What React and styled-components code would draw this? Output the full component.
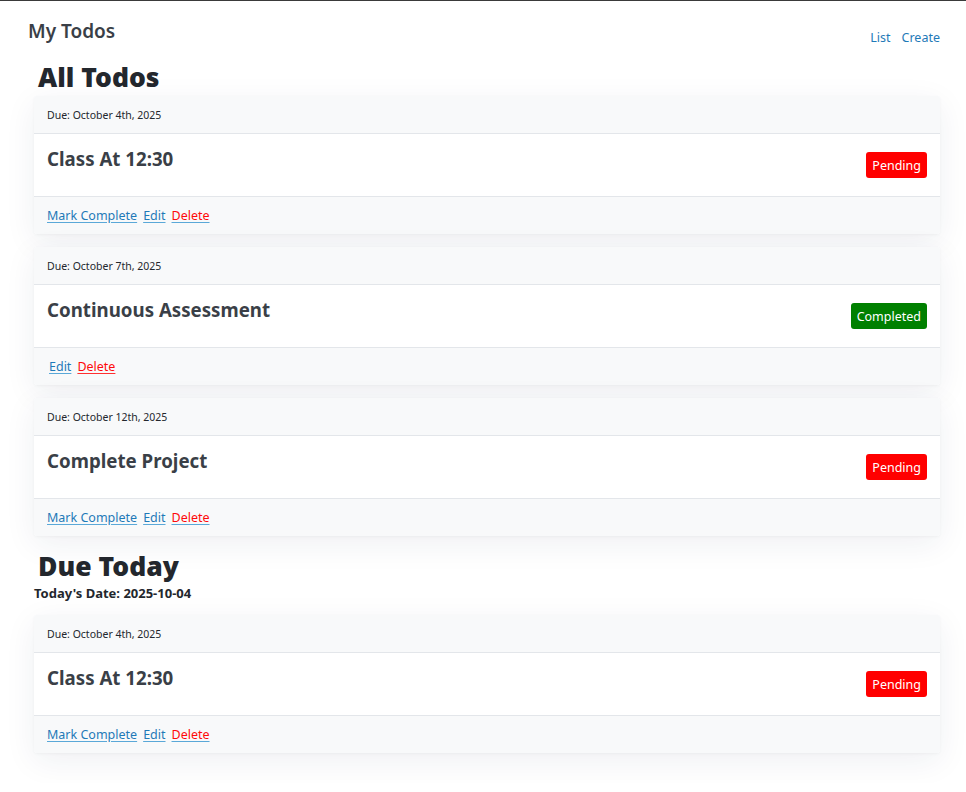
import styled, { createGlobalStyle } from "styled-components";

const GlobalStyle = createGlobalStyle`
  body {
    margin: 0;
    background: #fff;
    font-family: "Noto Sans", "Open Sans", sans-serif;
    color: #212529;
    border-top: 1px solid #3a3a3a;
  }
`;

const todos = [
  { id: 1, due: "October 4th, 2025", title: "Class At 12:30", done: false },
  { id: 2, due: "October 7th, 2025", title: "Continuous Assessment", done: true },
  { id: 3, due: "October 12th, 2025", title: "Complete Project", done: false },
];

const TodoCard = ({ todo }) => (
  <Card>
    <CardHeader>Due: {todo.due}</CardHeader>
    <CardBody>
      <Title>{todo.title}</Title>
      <Badge $done={todo.done}>{todo.done ? "Completed" : "Pending"}</Badge>
    </CardBody>
    <CardFooter $done={todo.done}>
      {!todo.done && <ActionLink href="#">Mark Complete</ActionLink>}
      <ActionLink href="#">Edit</ActionLink>
      <DeleteLink href="#" $done={todo.done}>
        Delete
      </DeleteLink>
    </CardFooter>
  </Card>
);

export default function App() {
  return (
    <>
      <GlobalStyle />
      <Nav>
        <Brand>My Todos</Brand>
        <NavLinks>
          <NavLink href="#">List</NavLink>
          <NavLink href="#">Create</NavLink>
        </NavLinks>
      </Nav>
      <Main>
        <Heading>All Todos</Heading>
        <CardList>
          {todos.map((t) => (
            <TodoCard key={t.id} todo={t} />
          ))}
        </CardList>
        <Heading $spaced>Due Today</Heading>
        <TodayDate>Today's Date: 2025-10-04</TodayDate>
        <CardList $spaced>
          <TodoCard todo={todos[0]} />
        </CardList>
      </Main>
    </>
  );
}

// Styled components
const Nav = styled.nav`
  display: flex;
  justify-content: space-between;
  align-items: flex-start;
  padding: 17px 26px 0 28px;
`;

const Brand = styled.div`
  font-size: 19px;
  font-weight: 600;
  color: #3a3f47;
`;

const NavLinks = styled.div`
  display: flex;
  gap: 11px;
  margin-top: 11px;
`;

const NavLink = styled.a`
  font-size: 12.5px;
  color: #1f7ab8;
  text-decoration: none;
`;

const Main = styled.main`
  margin: 0 26px 0 34px;
  padding-bottom: 30px;
`;

const Heading = styled.h2`
  margin: ${(p) => (p.$spaced ? "15px" : "16px")} 0 0 4px;
  font-size: 26.5px;
  font-weight: 900;
  line-height: 30px;
  color: #23272d;
`;

const TodayDate = styled.div`
  font-size: 13px;
  font-weight: 700;
  color: #23272d;
  margin-top: 3px;
`;

const CardList = styled.div`
  display: flex;
  flex-direction: column;
  gap: 13px;
  margin-top: ${(p) => (p.$spaced ? "13px" : "4px")};
`;

const Card = styled.div`
  background: #fff;
  border-radius: 3px;
  box-shadow: 0 8px 32px rgba(30, 40, 90, 0.07), 0 1px 3px rgba(0, 0, 0, 0.04);
  overflow: hidden;
`;

const CardHeader = styled.div`
  background: #f8f9fa;
  border-bottom: 1px solid #e3e6ea;
  height: 37px;
  display: flex;
  align-items: center;
  padding: 0 13px;
  font-size: 10.5px;
  color: #23272d;
`;

const CardBody = styled.div`
  height: 62px;
  display: flex;
  justify-content: space-between;
  align-items: flex-start;
  padding: 0 13px;
`;

const Title = styled.h3`
  margin: 12px 0 0;
  font-size: 18.7px;
  font-weight: 700;
  color: #3a3f47;
`;

const Badge = styled.span`
  margin-top: 18px;
  height: 26px;
  padding: 0 6px;
  display: flex;
  align-items: center;
  border-radius: 3px;
  font-size: 12.5px;
  color: #fff;
  background: ${(p) => (p.$done ? "#008000" : "#ff0000")};
`;

const CardFooter = styled.div`
  background: #f8f9fa;
  border-top: 1px solid #e3e6ea;
  height: 37px;
  display: flex;
  align-items: center;
  gap: 6px;
  padding: 0 ${(p) => (p.$done ? "15px" : "13px")};
`;

const ActionLink = styled.a`
  font-size: 12.5px;
  color: #1f7ab8;
  text-decoration: underline;
  text-decoration-color: #5aa8d8;
  text-underline-offset: 2px;
`;

const DeleteLink = styled(ActionLink)`
  color: #ff0a0a;
  text-decoration-color: ${(p) => (p.$done ? "#ff3030" : "#5aa8d8")};
`;
